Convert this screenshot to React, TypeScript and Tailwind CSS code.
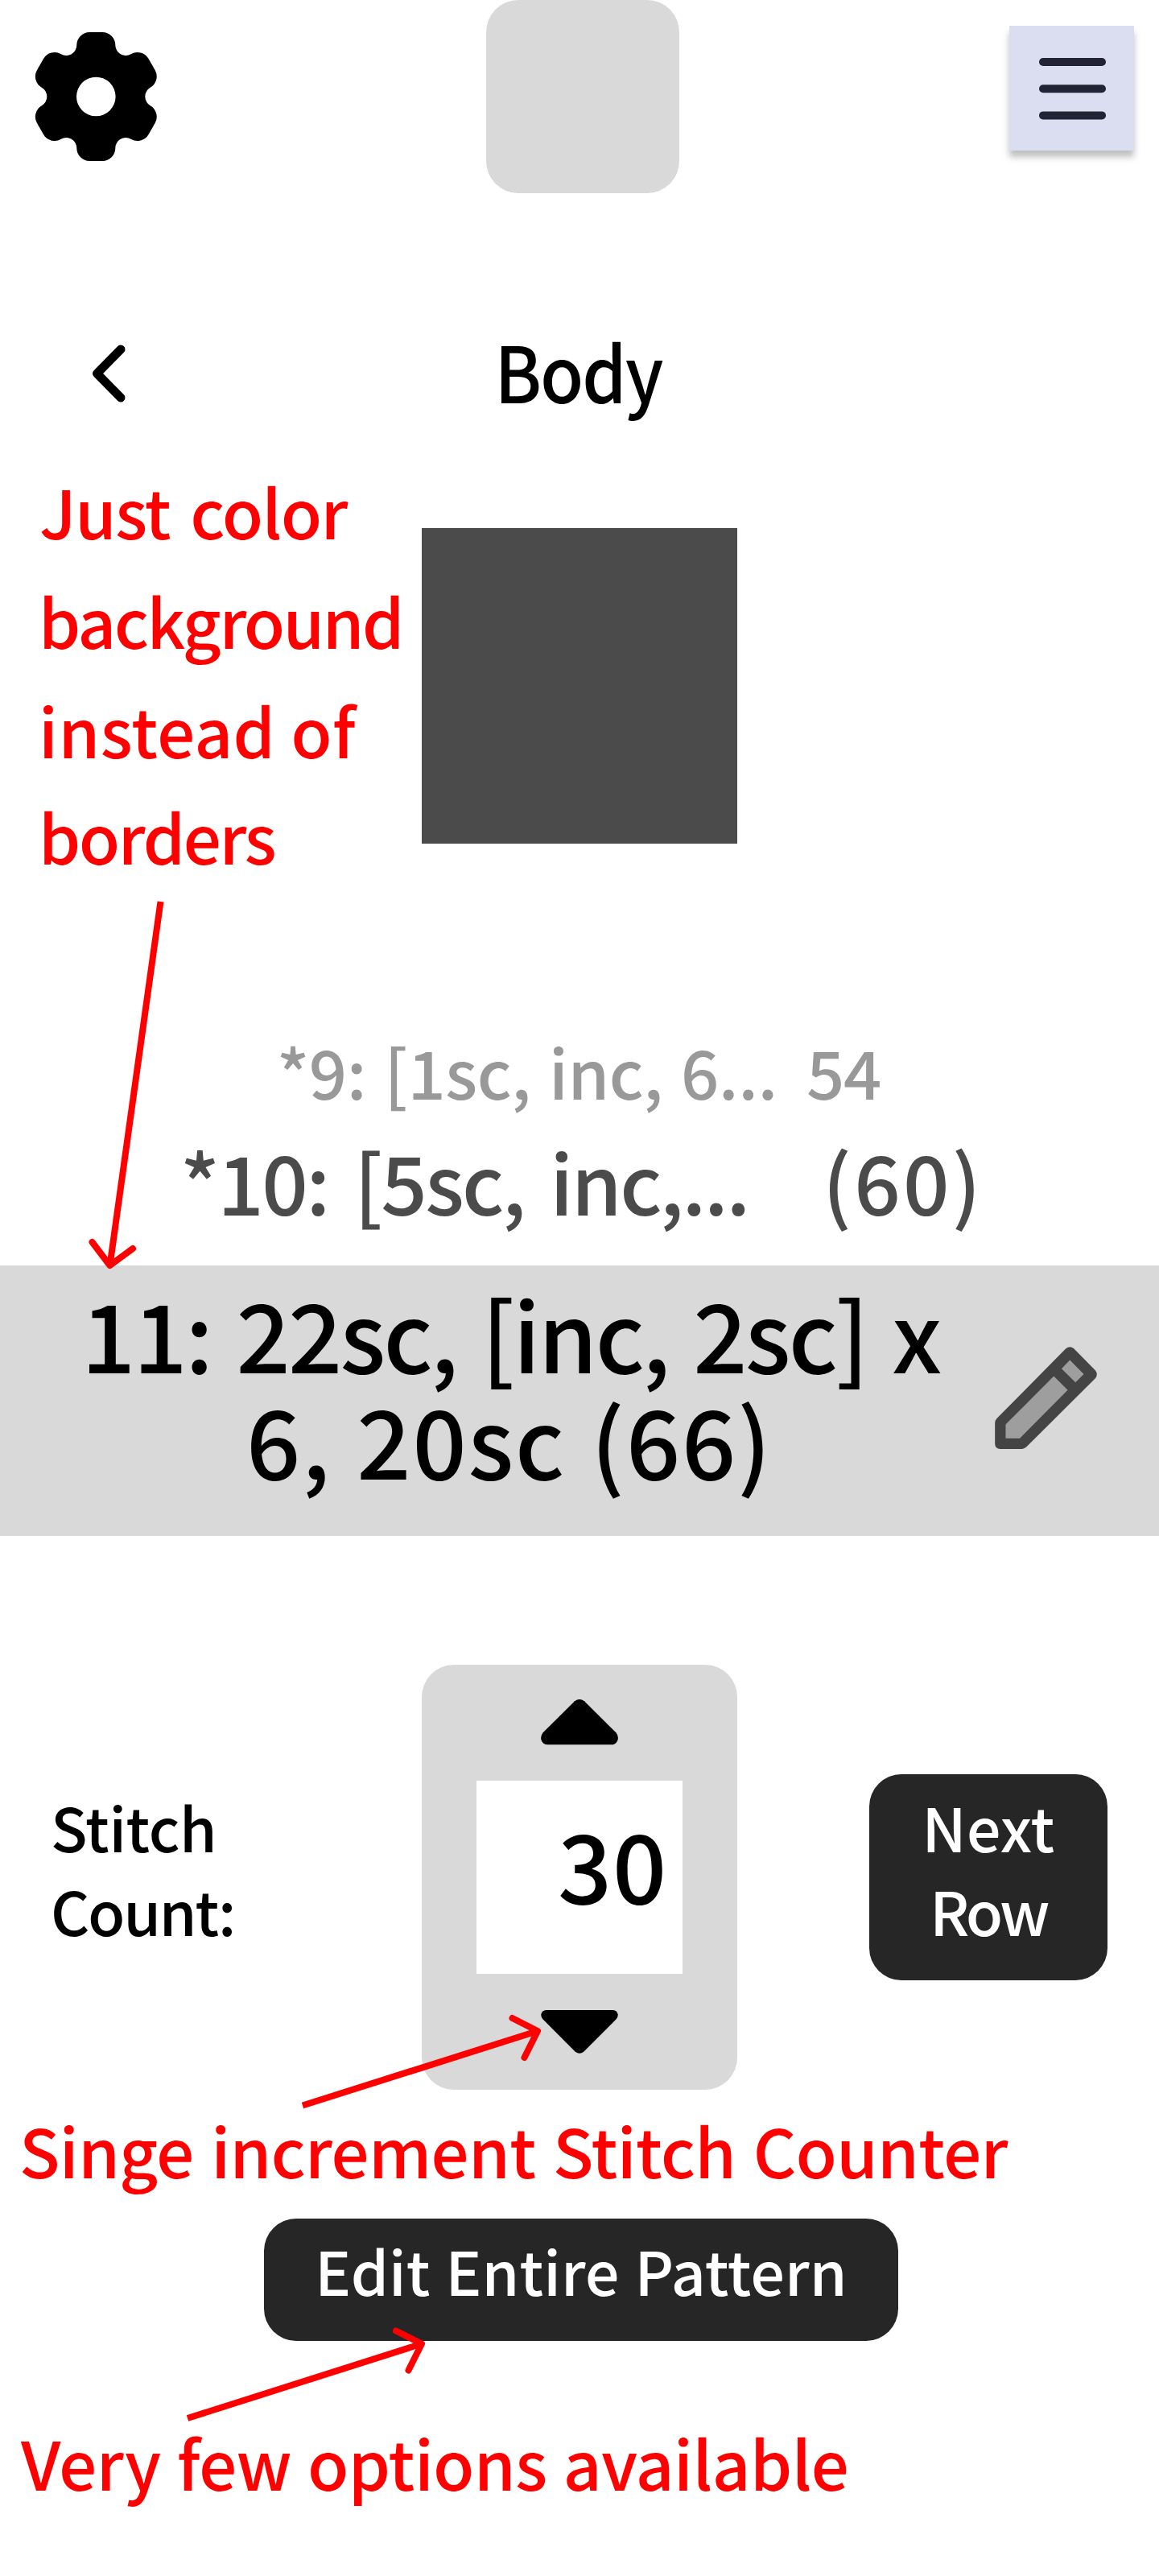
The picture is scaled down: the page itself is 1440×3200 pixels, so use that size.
import type { ReactNode } from "react";

function rotate(x: number, y: number, deg: number) {
  const r = (deg * Math.PI) / 180;
  return `${(x * Math.cos(r) - y * Math.sin(r)).toFixed(2)} ${(x * Math.sin(r) + y * Math.cos(r)).toFixed(2)}`;
}

// Six identical teeth around the hub, joined by concave arcs.
const teeth = [0, 60, 120, 180, 240, 300]
  .map((deg) => {
    const start = deg === 0 ? `M${rotate(-24, -64, 0)}` : "";
    return `${start}A16 16 0 0 1 ${rotate(-8, -80, deg)}L${rotate(8, -80, deg)}A16 16 0 0 1 ${rotate(24, -64, deg)}A13 13 0 0 0 ${rotate(-24, -64, deg + 60)}`;
  })
  .join("");

function GearIcon() {
  return (
    <svg className="h-[160px] w-[154px]" viewBox="-77.300 -80 154 160">
      <path fillRule="evenodd" d={`${teeth}ZM24.3 0A24.3 24.3 0 1 0 -24.3 0A24.3 24.3 0 1 0 24.3 0Z`} />
    </svg>
  );
}

function MenuIcon() {
  return (
    <svg className="h-[77px] w-[83px]" viewBox="0 0 83 77" fill="#222433">
      <rect width="83" height="10" rx="5" />
      <rect y="33.2" width="83" height="10" rx="5" />
      <rect y="66.4" width="83" height="10" rx="5" />
    </svg>
  );
}

function BackIcon() {
  return (
    <svg className="h-[72px] w-[42px]" viewBox="0 0 42 72" fill="none" stroke="#000" strokeWidth="11" strokeLinecap="round" strokeLinejoin="round">
      <path d="M36 6L6.500 36L36 66" />
    </svg>
  );
}

function PencilIcon() {
  return (
    <svg className="h-[127px] w-[127px]" viewBox="108 98 381 382">
      <path
        fill="#444444"
        d="M108 460V384Q108 373 115 366L373 105Q388 93 403 105L483 186Q495 201 483 216L226 472Q218 480 208 480H128Q108 480 108 460Z"
      />
      <path fill="#9e9e9e" d="M148 388L328 208L380 260L201 440H148ZM388 148L440 200L409 231L357 180Z" />
    </svg>
  );
}

function UpIcon() {
  return (
    <svg className="h-[57px] w-[96px]" viewBox="96 93 288 171">
      <path d="M222 100Q240 86 258 100L376 217Q386 228 383 243Q377 262 358 262H122Q103 262 97 243Q94 228 104 217Z" />
    </svg>
  );
}

function DownIcon() {
  return (
    <svg className="h-[54px] w-[96px]" viewBox="96 1250 288 163">
      <path d="M114 1250H366Q380 1251 384 1266Q385 1276 377 1285L255 1407Q240 1418 225 1407L103 1285Q95 1276 96 1266Q100 1251 114 1250Z" />
    </svg>
  );
}

function Arrows() {
  return (
    <svg className="pointer-events-none absolute left-0 top-0 h-[3200px] w-[1440px]" viewBox="0 0 1440 3200" fill="none" stroke="#ff0000" strokeWidth="8" strokeLinejoin="round">
      <path d="M199.500 1120L136.500 1572M376 2615.500L668 2523M233 3004L524 2911.500" />
      <path strokeLinecap="round" d="M114.500 1543L136.500 1572L165 1551M636.500 2507L668 2523L651.500 2556M492 2895.500L524 2911.500L507.500 2944.500" />
    </svg>
  );
}

function Note({ className, children }: { className: string; children: ReactNode }) {
  return <p className={`whitespace-pre text-[83px] text-[#ff0000] ${className}`}>{children}</p>;
}

export default function App() {
  return (
    <main className="relative flex h-[3200px] w-[1440px] flex-col overflow-hidden bg-white font-['Noto_Sans_CJK_SC',sans-serif] font-medium text-black">
      <header className="grid h-[240px] grid-cols-[604px_240px_1fr] items-start">
        <button className="ml-[42px] mt-[40px] w-[154px]">
          <GearIcon />
        </button>
        <div className="h-[240px] rounded-[40px] bg-[#d9d9d9]" />
        <button className="mr-[31px] mt-[32px] flex h-[155px] w-[155px] justify-center justify-self-end bg-[#dbddf1] pl-px pt-[40px] shadow-[0_8px_8px_rgba(0,0,0,0.25)]">
          <MenuIcon />
        </button>
      </header>

      <div className="mt-[158px] grid h-[120px] grid-cols-[524px_392px_1fr]">
        <button className="ml-[114px] mt-[30px] h-[72px] w-[42px]">
          <BackIcon />
        </button>
        <h1 className="origin-center scale-x-[0.914] pr-[3px] pt-[2px] text-center text-[96px] leading-[120px] tracking-[-2px]">Body</h1>
      </div>

      <section className="grid h-[722px] grid-cols-[524px_392px_1fr] items-start">
        <div className="pl-[48px] pt-[48px]">
          <Note className="pl-[1px] leading-[136px] tracking-[-1.4px] [word-spacing:8px]">Just color</Note>
          <Note className="leading-[136px] tracking-[-2.4px]">background</Note>
          <Note className="leading-[136px] tracking-[0.5px]">instead of</Note>
          <Note className="leading-[128px] tracking-[-2.2px]">borders</Note>
        </div>
        <div className="mt-[138px] h-[392px] bg-[#4b4b4b]" />
      </section>

      <section className="flex h-[332px] flex-col whitespace-pre pt-[30px] leading-[120px]">
        <div className="flex h-[136px] pl-[344px] text-[83px] text-[#999999]">
          <span className="w-[658px] tracking-[-0.4px] [word-spacing:4px]">*9: [1sc, inc, 6...</span>
          <span className="tracking-[-1.3px]">54</span>
        </div>
        <div className="flex h-[120px] pl-[224px] text-[101px] text-[#4b4b4b]">
          <span className="w-[798px] tracking-[-2.6px] [word-spacing:12px]">*10: [5sc, inc,...</span>
          <span className="tracking-[3.200px]">(60)</span>
        </div>
      </section>

      <section className="flex h-[336px] bg-[#d9d9d9]">
        <div className="w-[1236px] whitespace-pre pt-[17px] text-[118px] leading-[132px]">
          <p className="pl-[101px] tracking-[-2.7px] [word-spacing:7px]">11: 22sc, [inc, 2sc] x</p>
          <p className="pl-[306px] tracking-[1.8px] [word-spacing:3px]">6, 20sc (66)</p>
        </div>
        <button className="mt-[101px] h-[127px] w-[127px]">
          <PencilIcon />
        </button>
      </section>

      <section className="mt-[160px] grid h-[528px] grid-cols-[524px_392px_1fr] items-start">
        <div className="pl-[63px] pt-[149px] text-[75px] leading-[104px]">
          <p className="tracking-[-0.4px]">Stitch</p>
          <p className="tracking-[-2.1px]">Count:</p>
        </div>
        <div className="flex h-[528px] flex-col items-center rounded-[40px] bg-[#d9d9d9] pt-[43px]">
          <UpIcon />
          <div className="mt-[44px] h-[240px] w-[256px] bg-white pr-[19px] pt-[42px] text-right text-[118px] leading-[120px] tracking-[0.7px]">30</div>
          <div className="mt-[45px]">
            <DownIcon />
          </div>
        </div>
        <button className="ml-[164px] mt-[136px] flex h-[256px] w-[296px] flex-col items-center rounded-[40px] bg-[#262626] pt-[13px] text-[75px] leading-[104px] text-white">
          <span className="tracking-[0.3px]">Next</span>
          <span className="tracking-[-3.500px]">Row</span>
        </button>
      </section>

      <Note className="mt-[14px] pl-[24px] leading-[120px] tracking-[-0.6px] [word-spacing:3.500px]">Singe increment Stitch Counter</Note>

      <button className="ml-[328px] mt-[26px] h-[152px] w-[788px] shrink-0 rounded-[40px] bg-[#262626] pb-[25px] text-center text-[75px] leading-[120px] tracking-[0.1px] [word-spacing:2px] text-white">
        Edit Entire Pattern
      </button>

      <Note className="mt-[90px] pl-[26px] leading-[120px] tracking-[-0.5px] [word-spacing:2px]">Very few options available</Note>

      <Arrows />
    </main>
  );
}
